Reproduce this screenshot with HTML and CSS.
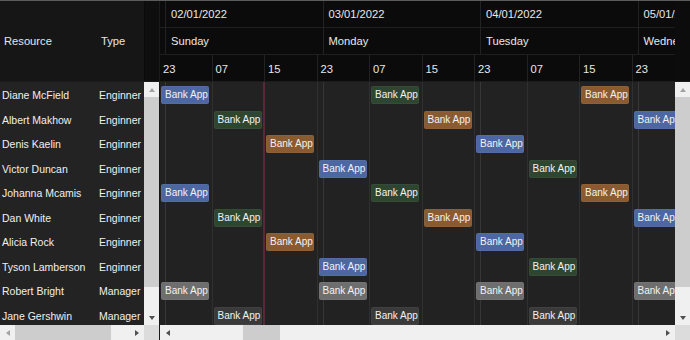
FILE: index.html
```html
<!DOCTYPE html>
<html>
<head>
<meta charset="utf-8">
<link rel="stylesheet" href="styles.css">
</head>
<body>
<div class="sched">
  <div class="left">
    <div class="lhead">
      <div class="lhcols"><span class="hname">Resource</span><span class="htype">Type</span></div>
      <div class="lgutter"></div>
    </div>
    <div class="lbody">
      <div class="rows">
        <div class="row"><span class="name">Diane McField</span><span class="type">Enginner</span></div>
        <div class="row"><span class="name">Albert Makhow</span><span class="type">Enginner</span></div>
        <div class="row"><span class="name">Denis Kaelin</span><span class="type">Enginner</span></div>
        <div class="row"><span class="name">Victor Duncan</span><span class="type">Enginner</span></div>
        <div class="row"><span class="name">Johanna Mcamis</span><span class="type">Enginner</span></div>
        <div class="row"><span class="name">Dan White</span><span class="type">Enginner</span></div>
        <div class="row"><span class="name">Alicia Rock</span><span class="type">Enginner</span></div>
        <div class="row"><span class="name">Tyson Lamberson</span><span class="type">Enginner</span></div>
        <div class="row"><span class="name">Robert Bright</span><span class="type">Manager</span></div>
        <div class="row"><span class="name">Jane Gershwin</span><span class="type">Manager</span></div>
      </div>
      <div class="vscroll">
        <div class="vbtn"><span class="arr up dis"></span></div>
        <div class="vthumb"></div>
        <div class="fill"></div>
        <div class="vbtn"><span class="arr down"></span></div>
      </div>
    </div>
    <div class="foot">
      <div class="hscroll lh">
        <div class="hbtn"><span class="arr lft dis"></span></div>
        <div class="hthumb lthumb"></div>
        <div class="fill"></div>
        <div class="hbtn"><span class="arr rgt"></span></div>
      </div>
      <div class="corner"></div>
    </div>
  </div>

  <div class="right">
    <div class="rhead">
      <div class="rhview">
        <div class="hrow">
          <div class="lead"></div>
          <div class="dcell">02/01/2022</div>
          <div class="dcell">03/01/2022</div>
          <div class="dcell">04/01/2022</div>
          <div class="dcell">05/01/2022</div>
        </div>
        <div class="hrow">
          <div class="lead"></div>
          <div class="dcell">Sunday</div>
          <div class="dcell">Monday</div>
          <div class="dcell">Tuesday</div>
          <div class="dcell">Wednesday</div>
        </div>
        <div class="hrow hours">
          <div class="hcell first">23</div>
          <div class="hcell">07</div>
          <div class="hcell">15</div>
          <div class="hcell">23</div>
          <div class="hcell">07</div>
          <div class="hcell">15</div>
          <div class="hcell">23</div>
          <div class="hcell">07</div>
          <div class="hcell">15</div>
          <div class="hcell">23</div>
        </div>
      </div>
      <div class="rgutter"></div>
    </div>
    <div class="rbody">
      <div class="viewport">
        <div class="grid">
          <div class="vl c0 div"></div>
          <div class="vl c1"></div>
          <div class="vl c2 now"></div>
          <div class="vl c3"></div>
          <div class="vl c4"></div>
          <div class="vl c5"></div>
          <div class="vl c6"></div>
          <div class="vl c7"></div>
          <div class="vl c8"></div>
          <div class="vl c9"></div>
          <div class="dl c0"></div>
          <div class="dl c3"></div>
          <div class="dl c6"></div>
          <div class="dl c9"></div>

          <div class="ev blue r0 c0">Bank App</div>
          <div class="ev green r0 c4">Bank App</div>
          <div class="ev brown r0 c8">Bank App</div>

          <div class="ev green r1 c1">Bank App</div>
          <div class="ev brown r1 c5">Bank App</div>
          <div class="ev blue r1 c9">Bank App</div>

          <div class="ev brown r2 c2">Bank App</div>
          <div class="ev blue r2 c6">Bank App</div>

          <div class="ev blue r3 c3">Bank App</div>
          <div class="ev green r3 c7">Bank App</div>

          <div class="ev blue r4 c0">Bank App</div>
          <div class="ev green r4 c4">Bank App</div>
          <div class="ev brown r4 c8">Bank App</div>

          <div class="ev green r5 c1">Bank App</div>
          <div class="ev brown r5 c5">Bank App</div>
          <div class="ev blue r5 c9">Bank App</div>

          <div class="ev brown r6 c2">Bank App</div>
          <div class="ev blue r6 c6">Bank App</div>

          <div class="ev blue r7 c3">Bank App</div>
          <div class="ev green r7 c7">Bank App</div>

          <div class="ev gray r8 c0">Bank App</div>
          <div class="ev gray r8 c3">Bank App</div>
          <div class="ev gray r8 c6">Bank App</div>
          <div class="ev gray r8 c9">Bank App</div>

          <div class="ev dgray r9 c1">Bank App</div>
          <div class="ev dgray r9 c4">Bank App</div>
          <div class="ev dgray r9 c7">Bank App</div>
        </div>
      </div>
      <div class="vscroll">
        <div class="vbtn"><span class="arr up dis"></span></div>
        <div class="vthumb"></div>
        <div class="fill"></div>
        <div class="vbtn"><span class="arr down"></span></div>
      </div>
    </div>
    <div class="foot">
      <div class="hscroll rh">
        <div class="hbtn"><span class="arr lft"></span></div>
        <div class="gap"></div>
        <div class="hthumb rthumb"></div>
        <div class="fill"></div>
        <div class="hbtn"><span class="arr rgt"></span></div>
      </div>
      <div class="corner"></div>
    </div>
  </div>
</div>
</body>
</html>
```

FILE: styles.css
```css
* { box-sizing: border-box; }
html, body { margin: 0; padding: 0; }
body {
  width: 690px;
  height: 340px;
  overflow: hidden;
  background: #222;
  font-family: "Liberation Sans", Arial, sans-serif;
  color: #eee;
}
.sched {
  display: flex;
  width: 690px;
  height: 340px;
  border-top: 1px solid #5c5c5c;
}
.left {
  width: 159px;
  display: flex;
  flex-direction: column;
}
.right {
  width: 531px;
  display: flex;
  flex-direction: column;
}

/* left header */
.lhead {
  height: 81px;
  display: flex;
  border-bottom: 1px solid #1c1c1c;
}
.lhcols {
  width: 144px;
  background: #161616;
  display: flex;
  align-items: center;
  font-size: 11.2px;
  color: #e6e6e6;
}
.hname { width: 97px; padding-left: 4px; }
.htype { padding-left: 4px; }
.lgutter {
  width: 15px;
  background: #0e0e0e;
  border-left: 1px solid #0a0a0a;
}

/* left body */
.lbody {
  height: 243px;
  display: flex;
  background: #232323;
}
.rows {
  width: 144px;
  height: 243px;
  overflow: hidden;
  padding-top: 1px;
}
.row {
  height: 24.5px;
  display: flex;
  align-items: center;
  font-size: 10.5px;
  color: #f0f0f0;
  white-space: nowrap;
}
.name { width: 97px; padding-left: 2px; overflow: hidden; }
.type { width: 47px; padding-left: 2px; overflow: hidden; }

/* scrollbars */
.vscroll {
  width: 15px;
  height: 243px;
  background: #f0f0f0;
  display: flex;
  flex-direction: column;
  flex: none;
}
.vbtn, .hbtn {
  width: 15px;
  height: 15px;
  display: flex;
  align-items: center;
  justify-content: center;
  flex: none;
}
.vthumb {
  height: 190px;
  background: #cdcdcd;
  flex: none;
}
.fill { flex: 1; }
.foot {
  height: 15px;
  display: flex;
}
.hscroll {
  height: 15px;
  background: #f0f0f0;
  display: flex;
}
.hscroll.lh { width: 144px; }
.hscroll.rh { width: 516px; border-left: 1px solid #1a1a1a; }
.hthumb { height: 15px; background: #cdcdcd; flex: none; }
.lthumb { width: 96px; }
.gap { width: 68px; flex: none; }
.rthumb { width: 37px; }
.corner { width: 15px; height: 15px; background: #dcdcdc; }

.arr { width: 0; height: 0; display: block; }
.arr.up { border-left: 3.5px solid transparent; border-right: 3.5px solid transparent; border-bottom: 4px solid #505050; }
.arr.down { border-left: 3.5px solid transparent; border-right: 3.5px solid transparent; border-top: 4px solid #505050; }
.arr.lft { border-top: 3.5px solid transparent; border-bottom: 3.5px solid transparent; border-right: 4px solid #505050; }
.arr.rgt { border-top: 3.5px solid transparent; border-bottom: 3.5px solid transparent; border-left: 4px solid #505050; }
.arr.up.dis { border-bottom-color: #a3a3a3; }
.arr.lft.dis { border-right-color: #a3a3a3; }

/* right header */
.rhead {
  height: 81px;
  display: flex;
  border-bottom: 1px solid #1c1c1c;
}
.rhview {
  width: 516px;
  background: #0b0b0b;
  display: flex;
  flex-direction: column;
  overflow: hidden;
}
.rgutter {
  width: 15px;
  background: #0c0c0c;
}
.hrow {
  height: 27px;
  display: flex;
  flex: none;
  border-bottom: 1px solid #1f1f1f;
  font-size: 11.2px;
  color: #e8e8e8;
  white-space: nowrap;
}
.hrow.hours { border-bottom: none; }
.lead {
  width: 6px;
  flex: none;
  border-left: 1px solid #1c1c1c;
}
.dcell {
  width: 157.5px;
  flex: none;
  border-left: 1px solid #222;
  padding-left: 5px;
  display: flex;
  align-items: center;
}
.hcell {
  width: 52.5px;
  flex: none;
  border-left: 1px solid #222;
  padding-left: 3px;
  display: flex;
  align-items: center;
}
.hcell.first { border-left-color: #1c1c1c; }

/* right body */
.rbody {
  height: 243px;
  display: flex;
}
.viewport {
  width: 516px;
  height: 243px;
  overflow: hidden;
  background: #222;
}
.grid {
  display: grid;
  grid-template-columns: repeat(10, 52.5px);
  grid-template-rows: repeat(10, 24.5px);
  width: 525px;
}
.vl {
  grid-row: 1 / 11;
  justify-self: start;
  width: 1px;
  background: #303030;
}
.vl.div { background: #161616; }
.vl.now { width: 2px; margin-left: -1px; background: #5a2839; }
.dl {
  grid-row: 1 / 11;
  justify-self: start;
  width: 1px;
  margin-left: 6px;
  background: #373737;
}
.c0 { grid-column: 1; } .c1 { grid-column: 2; } .c2 { grid-column: 3; }
.c3 { grid-column: 4; } .c4 { grid-column: 5; } .c5 { grid-column: 6; }
.c6 { grid-column: 7; } .c7 { grid-column: 8; } .c8 { grid-column: 9; }
.c9 { grid-column: 10; }
.r0 { grid-row: 1; } .r1 { grid-row: 2; } .r2 { grid-row: 3; }
.r3 { grid-row: 4; } .r4 { grid-row: 5; } .r5 { grid-row: 6; }
.r6 { grid-row: 7; } .r7 { grid-row: 8; } .r8 { grid-row: 9; }
.r9 { grid-row: 10; }

.ev {
  justify-self: start;
  align-self: start;
  width: 48px;
  height: 18px;
  margin: 4px 0 0 2px;
  padding-left: 3px;
  border-radius: 2px;
  border: 1px solid rgba(255,255,255,0.04);
  font-size: 10px;
  line-height: 16px;
  color: #f2f2f2;
  white-space: nowrap;
  overflow: hidden;
}
.ev.blue { background: #4c67a1; }
.ev.green { background: #2e4530; }
.ev.brown { background: #8a5a30; }
.ev.gray { background: #6e6e6e; }
.ev.dgray { background: #3a3a3a; }
```
